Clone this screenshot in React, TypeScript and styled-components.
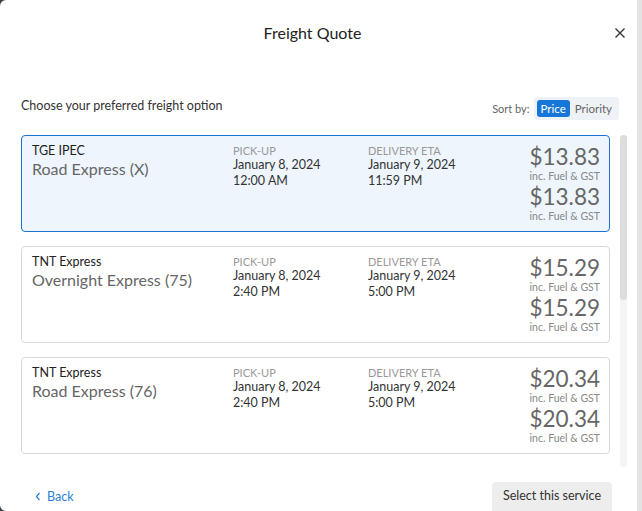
import { FC } from 'react'
import styled, { createGlobalStyle } from 'styled-components'

const quotes = [
  { carrier: 'TGE IPEC', service: 'Road Express (X)', pickDate: 'January 8, 2024', pickTime: '12:00 AM', etaDate: 'January 9, 2024', etaTime: '11:59 PM', price: '$13.83' },
  { carrier: 'TNT Express', service: 'Overnight Express (75)', pickDate: 'January 8, 2024', pickTime: '2:40 PM', etaDate: 'January 9, 2024', etaTime: '5:00 PM', price: '$15.29' },
  { carrier: 'TNT Express', service: 'Road Express (76)', pickDate: 'January 8, 2024', pickTime: '2:40 PM', etaDate: 'January 9, 2024', etaTime: '5:00 PM', price: '$20.34' },
  { carrier: 'Couriers Please', service: 'Standard', pickDate: 'January 8, 2024', pickTime: '2:40 PM', etaDate: 'January 10, 2024', etaTime: '5:00 PM', price: '$22.10' },
  { carrier: 'Hunter Express', service: 'General', pickDate: 'January 8, 2024', pickTime: '2:40 PM', etaDate: 'January 10, 2024', etaTime: '5:00 PM', price: '$24.75' },
  { carrier: 'StarTrack', service: 'Premium', pickDate: 'January 8, 2024', pickTime: '2:40 PM', etaDate: 'January 9, 2024', etaTime: '5:00 PM', price: '$28.60' },
]

const GlobalStyle = createGlobalStyle`
  html, body { margin: 0; padding: 0; }
  body {
    font-family: Lato, 'Noto Sans', sans-serif;
    background: #3b4047;
  }
`

const Page = styled.div`
  display: flex;
  width: 642px;
  height: 511px;
  overflow: hidden;
`

const Modal = styled.div`
  width: 637px;
  height: 511px;
  background: #fff;
  border-radius: 6px 0 0 6px;
  display: flex;
  flex-direction: column;
  & > * { flex-shrink: 0; }
`

const PageScroll = styled.div`
  width: 5px;
  background: #e3e3e3;
`

const Header = styled.header`
  height: 64px;
  display: flex;
  align-items: center;
  justify-content: center;
  position: relative;
  padding-right: 12px;
  h1 {
    margin: 0;
    font-size: 16px;
    font-weight: 400;
    color: #222;
  }
`

const Close = styled.button`
  position: absolute;
  right: 8px;
  top: 24px;
  width: 18px;
  height: 18px;
  border: none;
  background: none;
  padding: 0;
  cursor: pointer;
`

const Toolbar = styled.div`
  margin: 33px 18px 0 21px;
  height: 23px;
  display: flex;
  align-items: center;
  justify-content: space-between;
`

const Lead = styled.div`
  font-size: 12.5px;
  color: #333;
  margin-top: -6px;
`

const Sort = styled.div`
  display: flex;
  align-items: center;
  gap: 4px;
  font-size: 11px;
  color: #666;
`

const Segment = styled.div`
  display: flex;
  padding: 3px;
  gap: 1px;
  background: #eef1f5;
  border-radius: 3px;
`

const SegButton = styled.button<{ $active?: boolean }>`
  border: none;
  font-family: inherit;
  font-size: 11.5px;
  height: 17px;
  padding: 0 4px;
  border-radius: 3px;
  background: ${p => (p.$active ? '#1677d8' : 'transparent')};
  color: ${p => (p.$active ? '#fff' : '#666')};
  cursor: pointer;
`

const ListRow = styled.div`
  display: flex;
  margin: 15px 10px 0 21px;
  height: 332px;
`

const List = styled.div`
  flex: 1;
  overflow: hidden;
  display: flex;
  flex-direction: column;
  gap: 14px;
  padding-right: 10px;
`

const Track = styled.div`
  width: 7px;
  background: #f4f4f4;
  border-radius: 4px;
`

const Thumb = styled.div`
  height: 165px;
  background: #dcdcdc;
  border-radius: 4px;
`

const Card = styled.div<{ $selected?: boolean }>`
  flex: none;
  display: grid;
  grid-template-columns: 201px 135px 1fr auto;
  padding: 8px 9px 7px 10px;
  border: 1px solid ${p => (p.$selected ? '#1a73d2' : '#d6d9dd')};
  background: ${p => (p.$selected ? '#eef5fd' : '#fff')};
  border-radius: 4px;
  cursor: pointer;
`

const Carrier = styled.div`
  font-size: 12.5px;
  line-height: 14px;
  color: #222;
`

const Service = styled.div`
  font-size: 16px;
  line-height: 22px;
  color: #666;
`

const Label = styled.div`
  font-size: 11px;
  line-height: 13px;
  color: #999;
`

const Value = styled.div`
  font-size: 12.5px;
  line-height: 16px;
  color: #333;
`

const Prices = styled.div`
  text-align: right;
`

const Price = styled.div`
  font-size: 22.5px;
  line-height: 25px;
  color: #666;
`

const Note = styled.div`
  font-size: 10.5px;
  line-height: 15px;
  color: #888;
`

const Footer = styled.footer`
  display: flex;
  justify-content: space-between;
  align-items: flex-start;
  margin: 15px 25px 0 35px;
`

const Back = styled.a`
  display: flex;
  align-items: center;
  gap: 6px;
  margin-top: 7px;
  font-size: 12.5px;
  color: #2a7fd6;
  cursor: pointer;
`

const Primary = styled.button`
  border: none;
  background: #ededed;
  border-radius: 4px;
  height: 32px;
  padding: 0 11px 5px;
  font-family: inherit;
  font-size: 12.5px;
  color: #333;
  cursor: pointer;
`

const App: FC = () => {
  return (
    <>
      <GlobalStyle />
      <Page>
        <Modal>
          <Header>
            <h1>Freight Quote</h1>
            <Close aria-label="Close">
              <svg width="18" height="18" viewBox="0 0 18 18">
                <path d="M4.5 4.5 L13.5 13.5 M13.5 4.5 L4.5 13.5" stroke="#333" strokeWidth="1.4" fill="none" />
              </svg>
            </Close>
          </Header>
          <Toolbar>
            <Lead>Choose your preferred freight option</Lead>
            <Sort>
              Sort by:
              <Segment>
                <SegButton $active>Price</SegButton>
                <SegButton>Priority</SegButton>
              </Segment>
            </Sort>
          </Toolbar>
          <ListRow>
            <List>
              {quotes.map((q, i) => (
                <Card key={i} $selected={i === 0}>
                  <div>
                    <Carrier>{q.carrier}</Carrier>
                    <Service>{q.service}</Service>
                  </div>
                  <div>
                    <Label>PICK-UP</Label>
                    <Value>{q.pickDate}</Value>
                    <Value>{q.pickTime}</Value>
                  </div>
                  <div>
                    <Label>DELIVERY ETA</Label>
                    <Value>{q.etaDate}</Value>
                    <Value>{q.etaTime}</Value>
                  </div>
                  <Prices>
                    <Price>{q.price}</Price>
                    <Note>inc. Fuel &amp; GST</Note>
                    <Price>{q.price}</Price>
                    <Note>inc. Fuel &amp; GST</Note>
                  </Prices>
                </Card>
              ))}
            </List>
            <Track>
              <Thumb />
            </Track>
          </ListRow>
          <Footer>
            <Back>
              <svg width="6" height="9" viewBox="0 0 6 9">
                <path d="M4.5 1 L1.5 4.5 L4.5 8" stroke="#2a7fd6" strokeWidth="1.2" fill="none" />
              </svg>
              Back
            </Back>
            <Primary>Select this service</Primary>
          </Footer>
        </Modal>
        <PageScroll />
      </Page>
    </>
  )
}

export default App
